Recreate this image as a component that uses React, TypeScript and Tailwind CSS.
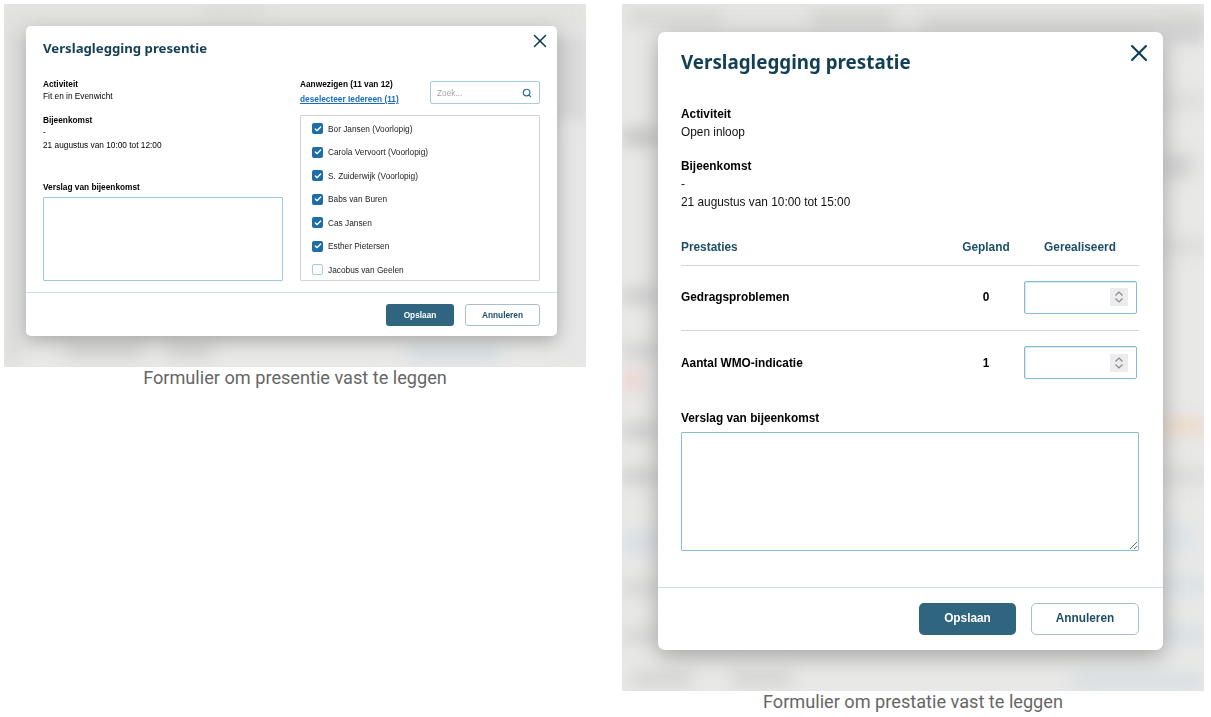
import { Check, Search, X } from "lucide-react";

const people = [
  { name: "Bor Jansen (Voorlopig)", checked: true },
  { name: "Carola Vervoort (Voorlopig)", checked: true },
  { name: "S. Zuiderwijk (Voorlopig)", checked: true },
  { name: "Babs van Buren", checked: true },
  { name: "Cas Jansen", checked: true },
  { name: "Esther Pietersen", checked: true },
  { name: "Jacobus van Geelen", checked: false },
];

const leftSmudges = [
  "left-0 top-0 h-[22px] w-[582px] bg-[#e0e0de]",
  "left-[200px] top-[0px] h-[14px] w-[60px] bg-[#dadad8]",
  "left-0 top-[20px] h-[340px] w-[16px] bg-[#dadad8]",
  "left-[552px] top-[30px] h-[90px] w-[30px] bg-[#d8d8d8]",
  "left-[552px] top-[120px] h-[240px] w-[30px] bg-[#e6e6e6]",
  "left-[60px] top-[342px] h-[10px] w-[80px] bg-[#cacaca]",
  "left-[162px] top-[342px] h-[10px] w-[46px] bg-[#cacaca]",
  "left-[405px] top-[344px] h-[10px] w-[90px] bg-[#ced8df]",
];

const rightSmudges = [
  "left-0 top-0 h-[24px] w-[582px] bg-[#e2e2e0]",
  "left-[10px] top-[8px] h-[12px] w-[90px] bg-[#d4d4d4]",
  "left-[190px] top-[8px] h-[14px] w-[80px] bg-[#cfcfcf]",
  "left-[300px] top-[12px] h-[14px] w-[282px] bg-[#d2d2d2]",
  "left-[0px] top-[125px] h-[16px] w-[36px] bg-[#c4c4c2]",
  "left-[0px] top-[285px] h-[14px] w-[36px] bg-[#cbcbcb]",
  "left-[0px] top-[340px] h-[14px] w-[36px] bg-[#d0d0d0]",
  "left-[0px] top-[368px] h-[18px] w-[20px] bg-[#eed2cd]",
  "left-[0px] top-[420px] h-[14px] w-[36px] bg-[#cbcbcb]",
  "left-[0px] top-[465px] h-[14px] w-[36px] bg-[#cbcbcb]",
  "left-[0px] top-[530px] h-[18px] w-[36px] bg-[#d6dfe5]",
  "left-[0px] top-[578px] h-[12px] w-[36px] bg-[#d2d2d2]",
  "left-[0px] top-[626px] h-[12px] w-[36px] bg-[#d2d2d2]",
  "left-[541px] top-[20px] h-[18px] w-[41px] bg-[#cecece]",
  "left-[541px] top-[150px] h-[24px] w-[30px] bg-[#d2d2d2]",
  "left-[541px] top-[90px] h-[14px] w-[41px] bg-[#dcdcda]",
  "left-[541px] top-[235px] h-[14px] w-[41px] bg-[#dadad8]",
  "left-[541px] top-[415px] h-[14px] w-[41px] bg-[#edd8c4]",
  "left-[541px] top-[465px] h-[14px] w-[41px] bg-[#d8d8d8]",
  "left-[541px] top-[525px] h-[18px] w-[30px] bg-[#dae2e8]",
  "left-[541px] top-[575px] h-[12px] w-[41px] bg-[#d3dee5]",
  "left-[541px] top-[625px] h-[12px] w-[41px] bg-[#d3dee5]",
  "left-[10px] top-[670px] h-[10px] w-[60px] bg-[#cacaca]",
  "left-[110px] top-[670px] h-[10px] w-[60px] bg-[#cacaca]",
  "left-[450px] top-[672px] h-[10px] w-[130px] bg-[#cfd9e0]",
];

function Stepper() {
  return (
    <div className="flex h-[18px] w-[18px] items-center justify-center bg-[#ececef]">
      <svg viewBox="0 0 18 18" className="h-[18px] w-[18px]" fill="none" stroke="#8a8a8a" strokeWidth="1.2">
        <path d="M5.5 7.5 9 4l3.5 3.5" />
        <path d="M5.5 10.5 9 14l3.5-3.5" />
      </svg>
    </div>
  );
}

function PresenceDialog() {
  return (
    <div className="relative z-10 w-[531px] rounded-[5px] bg-white pt-[12px] shadow-[0_5px_18px_rgba(0,0,0,0.28)] blur-[0.3px]">
      <button className="absolute left-[503px] top-[4px] text-[#0f3d52]">
        <X size={22} strokeWidth={1.7} />
      </button>
      <h2 className="pl-[17px] font-['Noto_Sans',sans-serif] text-[13.2px] font-bold leading-[20px] text-[#123f55]">
        Verslaglegging presentie
      </h2>
      <div className="mt-[20px] grid grid-cols-[240px_240px] gap-x-[17px] px-[17px]">
        <div className="flex flex-col text-[8.3px] leading-[12px] text-black">
          <div className="font-bold">Activiteit</div>
          <div>Fit en in Evenwicht</div>
          <div className="mt-[12px] font-bold">Bijeenkomst</div>
          <div>-</div>
          <div className="mt-[1px]">21 augustus van 10:00 tot 12:00</div>
          <div className="mt-[30px] font-bold">Verslag van bijeenkomst</div>
          <textarea className="mt-[4px] h-[84px] w-[240px] resize-none rounded-[1px] border border-[#9cc9dd] outline-none" />
        </div>
        <div className="flex flex-col text-[8.3px] leading-[12px] text-black">
          <div className="flex h-[37px] justify-between">
            <div>
              <div className="font-bold">Aanwezigen (11 van 12)</div>
              <a className="mt-[3px] block font-bold text-[#1a6cc0] underline">deselecteer Iedereen (11)</a>
            </div>
            <div className="mt-[3px] flex h-[23px] w-[110px] items-center justify-between rounded-[2px] border border-[#a5cbde] pl-[6px] pr-[7px] text-[#a3a3a3]">
              <span>Zoek...</span>
              <Search size={10} strokeWidth={2.8} className="text-[#2f6f8f]" />
            </div>
          </div>
          <div className="h-[166px] overflow-hidden rounded-[1px] border border-[#cfd5d8] pl-[11px] pt-[1px]">
            {people.map((p) => (
              <div key={p.name} className="flex h-[23.5px] items-center gap-[5px]">
                {p.checked ? (
                  <span className="flex h-[11px] w-[11px] items-center justify-center rounded-[2px] bg-[#1f6da6]">
                    <Check size={8} strokeWidth={4} className="text-white" />
                  </span>
                ) : (
                  <span className="h-[11px] w-[11px] rounded-[2px] border border-[#a9cbdc]" />
                )}
                <span className="text-[#222]">{p.name}</span>
              </div>
            ))}
          </div>
        </div>
      </div>
      <div className="mt-[11px] flex justify-end gap-[11px] border-t border-[#c9e0ea] pb-[10px] pr-[17px] pt-[11px] text-[8.3px] font-bold">
        <button className="h-[22px] w-[68px] rounded-[3px] bg-[#2f657f] text-white">Opslaan</button>
        <button className="h-[22px] w-[75px] rounded-[3px] border border-[#a9bfca] bg-white text-[#1d4f69]">Annuleren</button>
      </div>
    </div>
  );
}

function PerformanceRow({ name, planned, last }: { name: string; planned: number; last?: boolean }) {
  return (
    <div className={`grid h-[65px] grid-cols-[270px_70px_118px] items-center pb-[2px] text-black ${last ? "" : "border-b border-[#d4d4d4]"}`}>
      <div className="font-bold">{name}</div>
      <div className="text-center font-bold">{planned}</div>
      <div className="ml-[3px] flex h-[33px] w-[113px] items-center justify-end rounded-[2px] border border-[#85bdd6] pr-[8px] shadow-[inset_1px_1px_0_rgba(143,193,216,0.35)]">
        <Stepper />
      </div>
    </div>
  );
}

function PerformanceDialog() {
  return (
    <div className="relative z-10 w-[505px] rounded-[7px] bg-white pt-[16px] shadow-[0_6px_22px_rgba(0,0,0,0.3)] blur-[0.2px]">
      <button className="absolute left-[467px] top-[7px] text-[#0f3d52]">
        <X size={28} strokeWidth={1.8} />
      </button>
      <div className="pl-[23px] pr-[24px] font-['Liberation_Sans',sans-serif] text-[11.85px] leading-[18px]">
        <h2 className="font-['Noto_Sans',sans-serif] text-[18.8px] font-bold leading-[28px] text-[#123f55]">
          Verslaglegging prestatie
        </h2>
        <div className="mt-[29px] font-bold text-black">Activiteit</div>
        <div className="text-[#111]">Open inloop</div>
        <div className="mt-[16px] font-bold text-black">Bijeenkomst</div>
        <div className="text-[#111]">-</div>
        <div className="text-[#111]">21 augustus van 10:00 tot 15:00</div>
        <div className="mt-[18px] grid h-[37px] grid-cols-[270px_70px_118px] items-center border-b border-[#d4d4d4] font-bold text-[#1d4f69]">
          <div>Prestaties</div>
          <div className="text-center">Gepland</div>
          <div className="text-center">Gerealiseerd</div>
        </div>
        <PerformanceRow name="Gedragsproblemen" planned={0} />
        <PerformanceRow name="Aantal WMO-indicatie" planned={1} last />
        <div className="mt-[13px] font-bold text-black">Verslag van bijeenkomst</div>
        <textarea className="mt-[5px] block h-[119px] w-[458px] rounded-[1px] border border-[#85bdd6] outline-none" />
      </div>
      <div className="mt-[36px] flex justify-end gap-[15px] border-t border-[#c9e0ea] pb-[15px] pr-[24px] pt-[15px] font-['Liberation_Sans',sans-serif] text-[11.85px] font-bold">
        <button className="h-[32px] w-[97px] rounded-[5px] bg-[#2f657f] text-white">Opslaan</button>
        <button className="h-[32px] w-[108px] rounded-[5px] border border-[#a9bfca] bg-white text-[#1d4f69]">Annuleren</button>
      </div>
    </div>
  );
}

export default function App() {
  return (
    <div className="flex h-[717px] w-[1211px] gap-[36px] overflow-hidden bg-white pl-[4px] pt-[4px] font-['Liberation_Sans',sans-serif]">
      <figure className="w-[582px]">
        <div className="relative h-[363px] overflow-hidden bg-[#e8e8e7] pl-[22px] pt-[22px]">
          {leftSmudges.map((c) => (
            <div key={c} className={`absolute blur-[8px] ${c}`} />
          ))}
          <PresenceDialog />
        </div>
        <figcaption className="text-center font-['Roboto',sans-serif] text-[18.15px] leading-[22px] text-[#666]">
          Formulier om presentie vast te leggen
        </figcaption>
      </figure>
      <figure className="w-[582px]">
        <div className="relative h-[687px] overflow-hidden bg-[#e8e8e7] pl-[36px] pt-[28px]">
          {rightSmudges.map((c) => (
            <div key={c} className={`absolute blur-[8px] ${c}`} />
          ))}
          <PerformanceDialog />
        </div>
        <figcaption className="text-center font-['Roboto',sans-serif] text-[18.15px] leading-[22px] text-[#666]">
          Formulier om prestatie vast te leggen
        </figcaption>
      </figure>
    </div>
  );
}
